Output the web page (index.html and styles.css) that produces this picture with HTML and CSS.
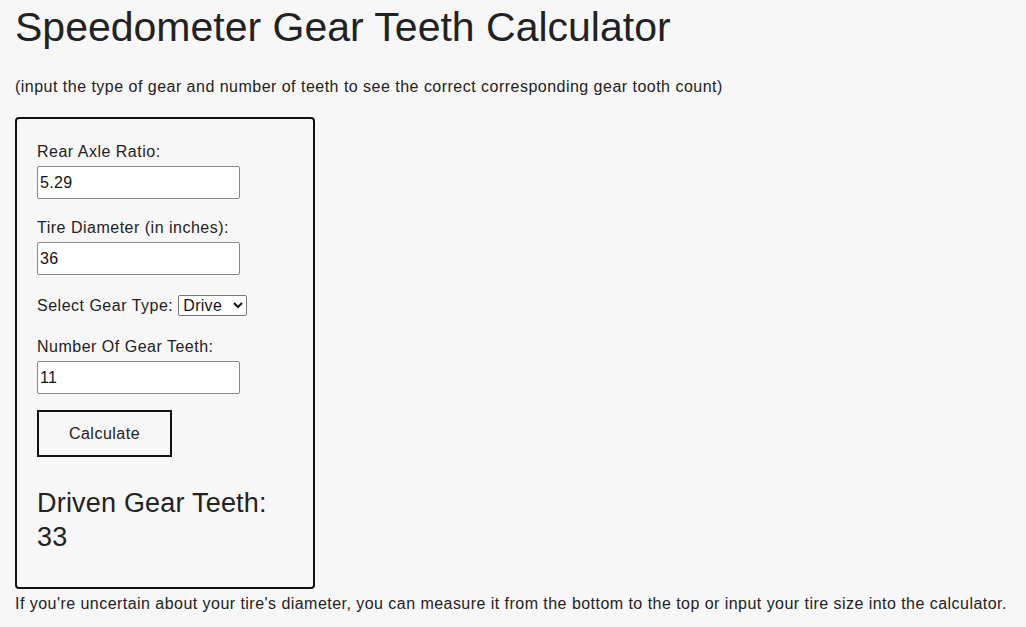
FILE: index.html
```html
<!DOCTYPE html>
<html lang="en">
<head>
<meta charset="utf-8">
<title>Speedometer Gear Teeth Calculator</title>
<link rel="stylesheet" href="styles.css">
</head>
<body>
<h1 class="title">Speedometer Gear Teeth Calculator</h1>
<p class="subtitle">(input the type of gear and number of teeth to see the correct corresponding gear tooth count)</p>
<div class="calc">
  <div class="field">
    <label class="label" for="ratio">Rear Axle Ratio:</label>
    <input class="input" id="ratio" type="text" value="5.29">
  </div>
  <div class="field">
    <label class="label" for="tire">Tire Diameter (in inches):</label>
    <input class="input" id="tire" type="text" value="36">
  </div>
  <div class="field-inline">
    <label class="label" for="type">Select Gear Type:</label>
    <select class="select" id="type"><option>Drive</option><option>Driven</option></select>
  </div>
  <div class="field">
    <label class="label" for="teeth">Number Of Gear Teeth:</label>
    <input class="input" id="teeth" type="text" value="11">
  </div>
  <button class="btn" type="button">Calculate</button>
  <div class="result">Driven Gear Teeth:<br>33</div>
</div>
<p class="note">If you're uncertain about your tire's diameter, you can measure it from the bottom to the top or input your tire size into the calculator.</p>
</body>
</html>
```
FILE: styles.css
```css
html, body {
  margin: 0;
  padding: 0;
  background: #f7f7f7;
}
body {
  padding: 0 15px;
  font-family: "Liberation Sans", Arial, sans-serif;
  color: #222;
  font-size: 16px;
  letter-spacing: 0.5px;
}
.title {
  font-size: 41px;
  font-weight: normal;
  letter-spacing: 0;
  margin: 4px 0 0 0;
  line-height: 46px;
}
.subtitle {
  margin: 28px 0 0 0;
  line-height: 18px;
  letter-spacing: 0.48px;
}
.calc {
  margin-top: 21px;
  box-sizing: border-box;
  width: 300px;
  height: 472px;
  border: 2px solid #111;
  border-radius: 4px;
  padding: 24px 20px 0 20px;
  display: flex;
  flex-direction: column;
  align-items: flex-start;
}
.field {
  display: flex;
  flex-direction: column;
  align-items: flex-start;
  gap: 5px;
  margin-bottom: 20px;
}
.label {
  line-height: 18px;
}
.input {
  width: 203px;
  height: 33px;
  box-sizing: border-box;
  border: 1px solid #888;
  border-radius: 2px;
  background: #fff;
  padding: 0 2px;
  font: 16px "Liberation Sans", Arial, sans-serif;
  letter-spacing: 0.3px;
  color: #111;
}
.field-inline {
  display: flex;
  align-items: center;
  gap: 5px;
  margin-bottom: 22px;
}
.select {
  font: 16px "Liberation Sans", Arial, sans-serif;
  letter-spacing: 0.3px;
  height: 21px;
  width: 69px;
  border: 1px solid #777;
  border-radius: 2px;
  background: #fff;
  color: #111;
  padding: 0;
}
.btn {
  margin-top: -4px;
  width: 135px;
  height: 47px;
  background: transparent;
  border: 2px solid #111;
  font: 16px "Liberation Sans", Arial, sans-serif;
  letter-spacing: 0.5px;
  color: #222;
  cursor: pointer;
}
.result {
  margin-top: 29px;
  font-size: 27px;
  letter-spacing: 0.2px;
  line-height: 34px;
}
.note {
  margin: 6px 0 0 0;
  line-height: 18px;
  letter-spacing: 0.46px;
  white-space: nowrap;
}
```
